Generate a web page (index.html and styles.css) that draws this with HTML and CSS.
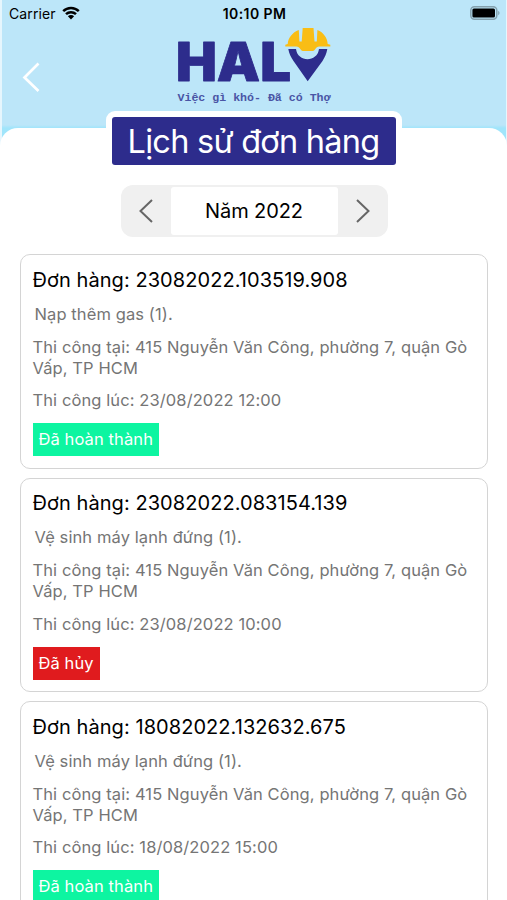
FILE: index.html
```html
<!DOCTYPE html>
<html lang="vi">

<head>
    <meta charset="UTF-8">
    <meta name="viewport" content="width=device-width, initial-scale=1.0">
    <title>Lịch sử đơn hàng</title>
    <link rel="stylesheet" href="styles.css">
</head>

<body>

    <!-- Header with status bar and logo -->
    <header class="header">
        <div class="status-bar">
            <div class="carrier">
                <span>Carrier</span>
                <svg class="wifi" viewBox="0 0 18 14" width="18" height="14">
                    <path d="M1.2 5.2a11.2 11.2 0 0 1 15.6 0M4 8.2a7.2 7.2 0 0 1 10 0" fill="none" stroke="#000" stroke-width="2.5"/>
                    <path d="M9 13.4L5.9 10.3a4.4 4.4 0 0 1 6.2 0z" fill="#000"/>
                </svg>
            </div>
            <div class="clock">10:10 PM</div>
            <svg class="battery" viewBox="0 0 30 14" width="30" height="14">
                <rect x="0.8" y="0.8" width="26" height="12.4" rx="3.6" fill="none" stroke="#84a1ae" stroke-width="1.5"/>
                <rect x="2.4" y="2.4" width="22.6" height="9.2" rx="1.5" fill="#000"/>
                <path d="M28.2 4.8c1.8.8 1.8 3.6 0 4.400z" fill="#84a1ae"/>
            </svg>
        </div>

        <div class="brand-row">
            <svg class="back" viewBox="0 0 20 32" width="20" height="32">
                <path d="M18.500 2.500L4.500 16.500L18.500 30" fill="none" stroke="#fff" stroke-width="2.700"/>
            </svg>
            <svg class="logo" viewBox="0 0 160 80" width="160" height="80">
                <text class="logo-name" x="1" y="54" textLength="115" lengthAdjust="spacingAndGlyphs">HAL</text>
                <text class="logo-slogan" x="2.500" y="73.500" textLength="153" lengthAdjust="spacingAndGlyphs">Việc gì khó- Đã có Thợ</text>
                <path d="M113.300 22h7.700c1.500 13.500 21.500 13.500 23 0h8.300c-.8 4.500-2.300 8-4.800 12L132.700 54.300L118.500 34c-2.700-4-4.400-7.500-5.200-12z" fill="#2d2c8c"/>
                <path d="M110.300 19.500v-1.800l2.400-.7c.4-6 4.600-11.600 11.100-14l.6 11.500h2.300l1-13.500h10.800l1 13.500h2.300l.6-11.500c6.200 2.400 9.900 8 10.300 14l2.600.7v1.800h-11c-2 0-3 1-4 2.500-1 1.700-2 2-4 2h-7c-2 0-3-.3-4-2-1-1.500-2-2.500-4-2.500z" fill="#f9bd15"/>
            </svg>
        </div>
    </header>

    <!-- White sheet -->
    <main class="sheet">
        <h1 class="page-title"><span>Lịch sử đơn hàng</span></h1>

        <div class="year-picker">
            <button class="year-btn">
                <svg viewBox="0 0 16 26" width="16" height="26"><path d="M14 2L2.500 13L14 24"/></svg>
            </button>
            <div class="year">Năm 2022</div>
            <button class="year-btn">
                <svg viewBox="0 0 16 26" width="16" height="26"><path d="M2 2L13.500 13L2 24"/></svg>
            </button>
        </div>

        <div class="orders">
            <article class="order">
                <h2>Đơn hàng: 23082022.103519.908</h2>
                <p class="service">Nạp thêm gas (1).</p>
                <p class="address">Thi công tại: 415 Nguyễn Văn Công, phường 7, quận Gò<br>Vấp, TP HCM</p>
                <p class="time">Thi công lúc: 23/08/2022 12:00</p>
                <span class="status done">Đã hoàn thành</span>
            </article>

            <article class="order">
                <h2>Đơn hàng: 23082022.083154.139</h2>
                <p class="service">Vệ sinh máy lạnh đứng (1).</p>
                <p class="address">Thi công tại: 415 Nguyễn Văn Công, phường 7, quận Gò<br>Vấp, TP HCM</p>
                <p class="time">Thi công lúc: 23/08/2022 10:00</p>
                <span class="status cancelled">Đã hủy</span>
            </article>

            <article class="order">
                <h2>Đơn hàng: 18082022.132632.675</h2>
                <p class="service">Vệ sinh máy lạnh đứng (1).</p>
                <p class="address">Thi công tại: 415 Nguyễn Văn Công, phường 7, quận Gò<br>Vấp, TP HCM</p>
                <p class="time">Thi công lúc: 18/08/2022 15:00</p>
                <span class="status done">Đã hoàn thành</span>
            </article>
        </div>
    </main>

</body>

</html>
```
FILE: styles.css
```css
/* Basic Reset */
* {
    box-sizing: border-box;
}

body {
    margin: 0;
    height: 900px;
    overflow: hidden;
    font-family: 'Inter', 'Liberation Sans', sans-serif;
    background-color: #fff;
    color: #000;
}

h1, h2, p {
    margin: 0;
    font-weight: 400;
}

/* Header */
.header {
    height: 148px;
    background: linear-gradient(#bce6f9 125px, #a0e5fb 128px);
    border-left: 2px solid #e6f6fd;
    border-right: 1px solid #e6f6fd;
}

.status-bar {
    display: grid;
    grid-template-columns: 1fr auto 1fr;
    align-items: center;
    height: 27px;
    padding: 0 6px 0 7px;
    font-size: 14px;
}

.carrier {
    display: flex;
    align-items: center;
    gap: 6px;
    letter-spacing: 0.1px;
}

.wifi {
    margin-top: -1px;
}

.clock {
    font-weight: 600;
    font-size: 14px;
    letter-spacing: 0.4px;
}

.battery {
    justify-self: end;
    margin-top: -1px;
}

.brand-row {
    display: flex;
    padding-left: 18px;
}

.back {
    margin-top: 34px;
}

.logo {
    margin-left: 135px;
}

.logo-name {
    font-size: 53.5px;
    font-weight: 900;
    fill: #2d2c8c;
    stroke: #2d2c8c;
    stroke-width: 0.8px;
    stroke-linejoin: round;
}

.logo-slogan {
    font-family: 'Liberation Mono', monospace;
    font-size: 11px;
    font-weight: 700;
    fill: #4a55a5;
}

/* White sheet */
.sheet {
    display: flex;
    flex-direction: column;
    align-items: center;
    margin-top: -20px;
    background: #fff;
    border-radius: 18px 18px 0 0;
}

.page-title {
    margin-top: -17px;
    padding: 6px;
    background: #fff;
    border-radius: 9px;
    font-size: 32.5px;
    line-height: 50px;
    letter-spacing: -0.75px;
}

.page-title span {
    display: block;
    width: 284px;
    height: 48px;
    background: #2d2c8c;
    border-radius: 3px;
    color: #fff;
    text-align: center;
    white-space: nowrap;
}

/* Year picker */
.year-picker {
    display: flex;
    width: 267px;
    height: 52px;
    margin: 14px 0 0 1px;
    padding: 2px 0;
    background: #f0f0f0;
    border-radius: 12px;
}

.year-btn {
    display: flex;
    align-items: center;
    justify-content: center;
    width: 50px;
    padding: 0;
    border: none;
    background: none;
}

.year-btn path {
    fill: none;
    stroke: #666;
    stroke-width: 2;
}

.year {
    flex: 1;
    background: #fff;
    border-radius: 3px;
    font-size: 20px;
    line-height: 49px;
    letter-spacing: -0.1px;
    text-align: center;
}

/* Orders */
.orders {
    display: flex;
    flex-direction: column;
    gap: 9px;
    width: 468px;
    margin-top: 17px;
}

.order {
    height: 214.5px;
    padding: 11.5px 12px 0;
    border: 1px solid #d4d4d4;
    border-radius: 10px;
    color: #757575;
    font-size: 16.5px;
    line-height: 21px;
    letter-spacing: 0.1px;
    white-space: nowrap;
}

.order h2 {
    color: #000;
    font-size: 20px;
    line-height: 26px;
    letter-spacing: 0.06px;
}

.service {
    margin-top: 11px;
    padding-left: 2px;
}

.address {
    margin-top: 12px;
}

.time {
    margin-top: 11.5px;
}

.status {
    display: inline-block;
    height: 33px;
    margin-top: 12px;
    padding: 0 6px;
    color: #fff;
    line-height: 33px;
}

.done {
    background: #0df5a1;
}

.cancelled {
    background: #e01b1e;
}
```
